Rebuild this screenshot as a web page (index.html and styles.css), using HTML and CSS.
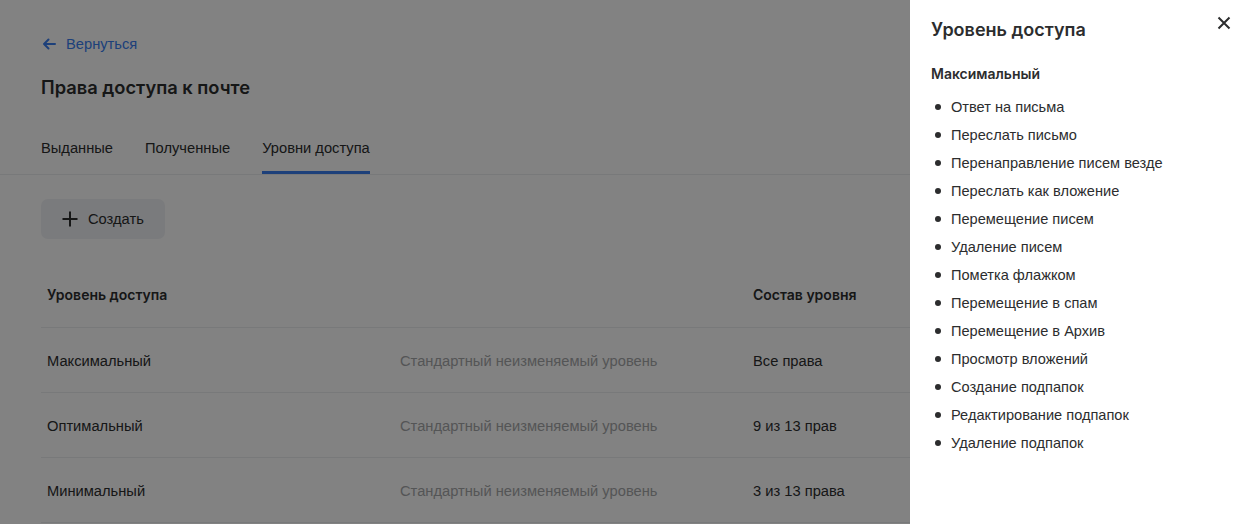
FILE: index.html
```html
<!DOCTYPE html>
<html lang="ru">
<head>
<meta charset="utf-8">
<title>Права доступа к почте</title>
<link rel="stylesheet" href="styles.css">
</head>
<body>
<div class="page">
  <header class="head">
    <a class="back" href="#">
      <svg class="back-icon" width="16" height="16" viewBox="0 0 16 16"><path d="M14 8H3M7.5 3.5L3 8l4.5 4.5" fill="none" stroke="currentColor" stroke-width="2" stroke-linecap="round" stroke-linejoin="round"/></svg>
      <span>Вернуться</span>
    </a>
    <h1 class="title">Права доступа к почте</h1>
    <nav class="tabs">
      <a class="tab" href="#">Выданные</a>
      <a class="tab" href="#">Полученные</a>
      <a class="tab tab-active" href="#">Уровни доступа</a>
    </nav>
  </header>
  <main class="content">
    <button class="create" type="button">
      <svg width="18" height="18" viewBox="0 0 18 18"><path d="M9 1.5v15M1.5 9h15" stroke="currentColor" stroke-width="2"/></svg>
      <span>Создать</span>
    </button>
    <div class="table">
      <div class="row row-head">
        <div class="cell">Уровень доступа</div>
        <div class="cell"></div>
        <div class="cell">Состав уровня</div>
      </div>
      <div class="row">
        <div class="cell">Максимальный</div>
        <div class="cell muted">Стандартный неизменяемый уровень</div>
        <div class="cell">Все права</div>
      </div>
      <div class="row">
        <div class="cell">Оптимальный</div>
        <div class="cell muted">Стандартный неизменяемый уровень</div>
        <div class="cell">9 из 13 прав</div>
      </div>
      <div class="row">
        <div class="cell">Минимальный</div>
        <div class="cell muted">Стандартный неизменяемый уровень</div>
        <div class="cell">3 из 13 права</div>
      </div>
    </div>
  </main>
</div>
<div class="overlay"></div>
<aside class="drawer">
  <div class="drawer-head">
    <h2 class="drawer-title">Уровень доступа</h2>
    <button class="close" type="button" aria-label="Закрыть">
      <svg width="14" height="14" viewBox="0 0 14 14"><path d="M1.5 1.5l11 11M12.5 1.5l-11 11" stroke="currentColor" stroke-width="2"/></svg>
    </button>
  </div>
  <h3 class="level">Максимальный</h3>
  <ul class="rights">
    <li>Ответ на письма</li>
    <li>Переслать письмо</li>
    <li>Перенаправление писем везде</li>
    <li>Переслать как вложение</li>
    <li>Перемещение писем</li>
    <li>Удаление писем</li>
    <li>Пометка флажком</li>
    <li>Перемещение в спам</li>
    <li>Перемещение в Архив</li>
    <li>Просмотр вложений</li>
    <li>Создание подпапок</li>
    <li>Редактирование подпапок</li>
    <li>Удаление подпапок</li>
  </ul>
</aside>
</body>
</html>
```
FILE: styles.css
```css
* { box-sizing: border-box; }
html, body { margin: 0; padding: 0; height: 100%; }
body {
  font-family: "Liberation Sans", Arial, sans-serif;
  font-size: 14.7px;
  color: #2c2d2e;
  background: #fff;
  overflow: hidden;
}
.page { min-height: 100%; }
.head {
  padding: 34px 41px 0;
  border-bottom: 1px solid #ebedf0;
}
.back {
  display: inline-flex;
  align-items: center;
  gap: 9px;
  height: 20px;
  color: #3a7ef0;
  text-decoration: none;
  font-size: 14.7px;
}
.back-icon { display: block; }
.title {
  margin: 20px 0 0;
  font-family: Inter, "Noto Sans", sans-serif;
  font-weight: 600;
  font-size: 18.3px;
  line-height: 24px;
  color: #2c2d2e;
}
.tabs {
  display: flex;
  gap: 32px;
  margin-top: 39px;
}
.tab {
  display: block;
  padding: 0 0 13px;
  line-height: 20px;
  color: #2c2d2e;
  text-decoration: none;
  border-bottom: 3px solid transparent;
}
.tab-active { border-bottom-color: #3a7ef0; }
.content { padding: 24px 41px 0; }
.create {
  display: inline-flex;
  align-items: center;
  gap: 9px;
  height: 40px;
  padding: 0 21px 0 20px;
  border: 0;
  border-radius: 7px;
  background: #f0f1f5;
  color: #2c2d2e;
  font-family: "Liberation Sans", Arial, sans-serif;
  font-size: 14.7px;
}
.create svg { display: block; }
.table { margin-top: 25px; }
.row {
  display: grid;
  grid-template-columns: 353px 353px 1fr;
  align-items: center;
  height: 65px;
  padding-top: 2px;
  border-bottom: 1px solid #ebedf0;
}
.row-head {
  height: 64px;
  padding-top: 0;
  padding-bottom: 2px;
  font-family: Inter, "Noto Sans", sans-serif;
  font-weight: 600;
  font-size: 14px;
}
.cell { padding: 0 6px; }
.muted { color: #a6a7a9; }
.overlay {
  position: fixed;
  inset: 0;
  background: rgba(0, 0, 0, 0.49);
}
.drawer {
  position: fixed;
  top: 0;
  right: 0;
  bottom: 0;
  width: 348px;
  background: #fff;
  padding: 18px 21px 0;
}
.drawer-head {
  display: flex;
  justify-content: space-between;
  align-items: flex-start;
}
.drawer-title {
  margin: 0;
  font-family: Inter, "Noto Sans", sans-serif;
  font-weight: 600;
  font-size: 18px;
  line-height: 24px;
  color: #2c2d2e;
}
.close {
  margin: -2px 6px 0 0;
  padding: 0;
  width: 14px;
  height: 14px;
  border: 0;
  background: none;
  color: #2c2d2e;
}
.close svg { display: block; }
.level {
  margin: 22px 0 0;
  font-family: Inter, "Noto Sans", sans-serif;
  font-weight: 600;
  font-size: 14px;
  line-height: 20px;
  color: #2c2d2e;
}
.rights {
  list-style: none;
  margin: 9px 0 0;
  padding: 0;
}
.rights li {
  display: flex;
  align-items: center;
  gap: 10px;
  height: 28px;
  padding-left: 4px;
  font-size: 14.6px;
  color: #2c2d2e;
}
.rights li::before {
  content: "";
  flex: none;
  width: 6px;
  height: 6px;
  border-radius: 50%;
  background: #2c2d2e;
}
```
